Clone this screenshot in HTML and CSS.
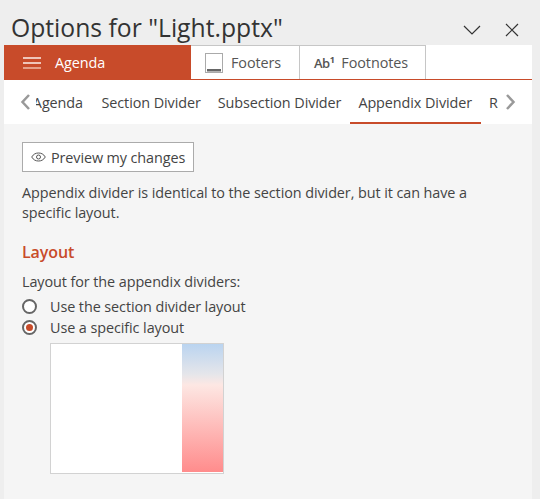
FILE: index.html
```html
<!DOCTYPE html>
<html lang="en">
  <head>
    <meta charset="UTF-8" />
    <title>Options</title>
    <link rel="stylesheet" href="styles.css">
  </head>
  <body>
    <div class="pane">
      <div class="title-bar">
        <h1 class="title">Options for "Light.pptx"</h1>
        <svg class="title-icon chevron" width="18" height="10" viewBox="0 0 18 10"><path d="M1 1l8 8 8-8" fill="none" stroke="#333" stroke-width="1.2"/></svg>
        <svg class="title-icon close" width="14" height="14" viewBox="0 0 14 14"><path d="M1 1l12 12M13 1L1 13" fill="none" stroke="#333" stroke-width="1.2"/></svg>
      </div>

      <div class="main-tabs">
        <div class="main-tab active">
          <svg width="18" height="12" viewBox="0 0 18 12"><path d="M0 1h18M0 6h18" stroke="#fbeee9" stroke-width="1.6"/><path d="M0 11h18" stroke="#eeb5a2" stroke-width="1.6"/></svg>
          <span>Agenda</span>
        </div>
        <div class="main-tab footers">
          <svg width="18" height="20" viewBox="0 0 18 20"><rect x=".5" y=".5" width="17" height="19" fill="#fff" stroke="#aaa"/><rect x="2" y="16" width="14" height="2.5" fill="#666"/></svg>
          <span>Footers</span>
        </div>
        <div class="main-tab footnotes">
          <span class="ab">Ab<sup>1</sup></span>
          <span>Footnotes</span>
        </div>
      </div>

      <div class="sub-tabs">
        <svg class="arrow prev" width="11" height="16" viewBox="0 0 11 16"><path d="M9 1L2.500 8 9 15" fill="none" stroke="#999" stroke-width="2.500"/></svg>
        <div class="sub-list">
          <div class="sub-tab first">Agenda</div>
          <div class="sub-tab">Section Divider</div>
          <div class="sub-tab">Subsection Divider</div>
          <div class="sub-tab active">Appendix Divider</div>
          <div class="sub-tab">Reorder</div>
        </div>
        <svg class="arrow next" width="11" height="16" viewBox="0 0 11 16"><path d="M2 1l6.500 7L2 15" fill="none" stroke="#999" stroke-width="2.500"/></svg>
      </div>

      <div class="content">
        <button class="preview">
          <svg width="15" height="10" viewBox="0 0 15 10"><path d="M.7 5C2.500 2 4.800 1 7.500 1s5 1 6.800 4c-1.800 3-4.100 4-6.800 4S2.500 8 .7 5z" fill="none" stroke="#555"/><circle cx="7.500" cy="5" r="2" fill="none" stroke="#555"/></svg>
          Preview my changes
        </button>
        <p class="desc">Appendix divider is identical to the section divider, but it can have a specific layout.</p>
        <h2 class="section-title">Layout</h2>
        <p class="field-label">Layout for the appendix dividers:</p>
        <div class="radio-row first-radio"><span class="radio"></span>Use the section divider layout</div>
        <div class="radio-row"><span class="radio checked"></span>Use a specific layout</div>
        <div class="thumb"><div class="thumb-side"></div></div>
      </div>
    </div>
  </body>
</html>
```
FILE: styles.css
```css
* {
  box-sizing: border-box;
}

html,
body {
  height: 100%;
}

body {
  margin: 0;
  overflow: hidden;
  font-family: "Open Sans", sans-serif;
  font-size: 14.4px;
  letter-spacing: -0.080px;
  color: #444;
  background: #eeeeee;
}

.pane {
  display: flex;
  flex-direction: column;
  width: 528px;
  height: 499px;
  margin-left: 4px;
}

.title-bar {
  display: flex;
  align-items: center;
  width: 536px;
  height: 45px;
  padding-left: 7px;
}

.title {
  flex: 1;
  margin: 10px 0 0;
  font-size: 24.700px;
  font-weight: 400;
  line-height: 34px;
  letter-spacing: 0;
  color: #333;
  white-space: nowrap;
}

.title-icon {
  flex: none;
  margin-top: 14px;
}

.chevron {
  margin-right: 24px;
}

.close {
  margin-right: 21px;
}

.main-tabs {
  display: flex;
  height: 35px;
  background: #fff;
  border-bottom: 1px solid #c84b2a;
}

.main-tab {
  display: flex;
  align-items: center;
  height: 34px;
  border: 1px solid #c6c6c6;
  border-left: 0;
  border-bottom: 0;
  background: #fff;
  color: #555;
}

.main-tab.active {
  width: 187px;
  height: 35px;
  padding-left: 19px;
  gap: 14px;
  border: 0;
  background: #c84b2a;
  color: #fff;
}

.footers {
  width: 109px;
  padding-left: 14px;
  gap: 8px;
}

.footnotes {
  width: 126px;
  padding-left: 14px;
  gap: 7px;
}

.ab {
  font-size: 13px;
  font-weight: 600;
  letter-spacing: -0.500px;
}

.ab sup {
  font-size: 9px;
  font-weight: 700;
  line-height: 0;
}

.sub-tabs {
  display: flex;
  align-items: center;
  height: 44px;
  background: #fff;
}

.arrow {
  flex: none;
}

.prev {
  margin: 0 5px 0 16px;
}

.next {
  margin: 0 16px 0 7px;
}

.sub-list {
  display: flex;
  flex: 1;
  min-width: 0;
  height: 100%;
  overflow: hidden;
}

.sub-tab {
  display: flex;
  align-items: center;
  flex: none;
  padding: 0 8.500px;
  white-space: nowrap;
}

.sub-tab.first {
  width: 57px;
  padding: 0 10px 0 0;
  justify-content: flex-end;
  overflow: hidden;
}

.sub-tab.active {
  border-top: 2px solid transparent;
  border-bottom: 2px solid #c84b2a;
}

.content {
  flex: 1;
  padding: 18px 18px 0;
  background: #f5f5f5;
}

.preview {
  display: flex;
  align-items: center;
  gap: 5px;
  height: 30px;
  padding: 0 8px;
  border: 1px solid #ababab;
  background: #fff;
  font-family: inherit;
  font-size: 14.4px;
  letter-spacing: -0.100px;
  color: #444;
}

.desc {
  width: 470px;
  margin: 11px 0 0;
  line-height: 20px;
}

.section-title {
  margin: 17px 0 0;
  font-size: 16px;
  font-weight: 600;
  line-height: 24px;
  color: #c84b2a;
}

.field-label {
  margin: 8px 0 0;
  line-height: 20px;
}

.radio-row {
  display: flex;
  align-items: center;
  height: 21px;
}

.first-radio {
  margin-top: 4px;
}

.radio {
  flex: none;
  display: flex;
  align-items: center;
  justify-content: center;
  width: 15px;
  height: 15px;
  margin-right: 13px;
  border: 2px solid #666;
  border-radius: 50%;
  background: #fff;
}

.radio.checked::after {
  content: "";
  width: 7px;
  height: 7px;
  border-radius: 50%;
  background: #c84b2a;
}

.thumb {
  display: flex;
  justify-content: flex-end;
  width: 174px;
  height: 131px;
  margin: 5px 0 0 28px;
  border: 1px solid #d2d2d2;
  background: #fff;
}

.thumb-side {
  width: 41px;
  margin-bottom: 1px;
  background: linear-gradient(#bad4f0 0%, #e6e6ea 24%, #fde7e3 32%, #ff8c8c 100%);
}
```
